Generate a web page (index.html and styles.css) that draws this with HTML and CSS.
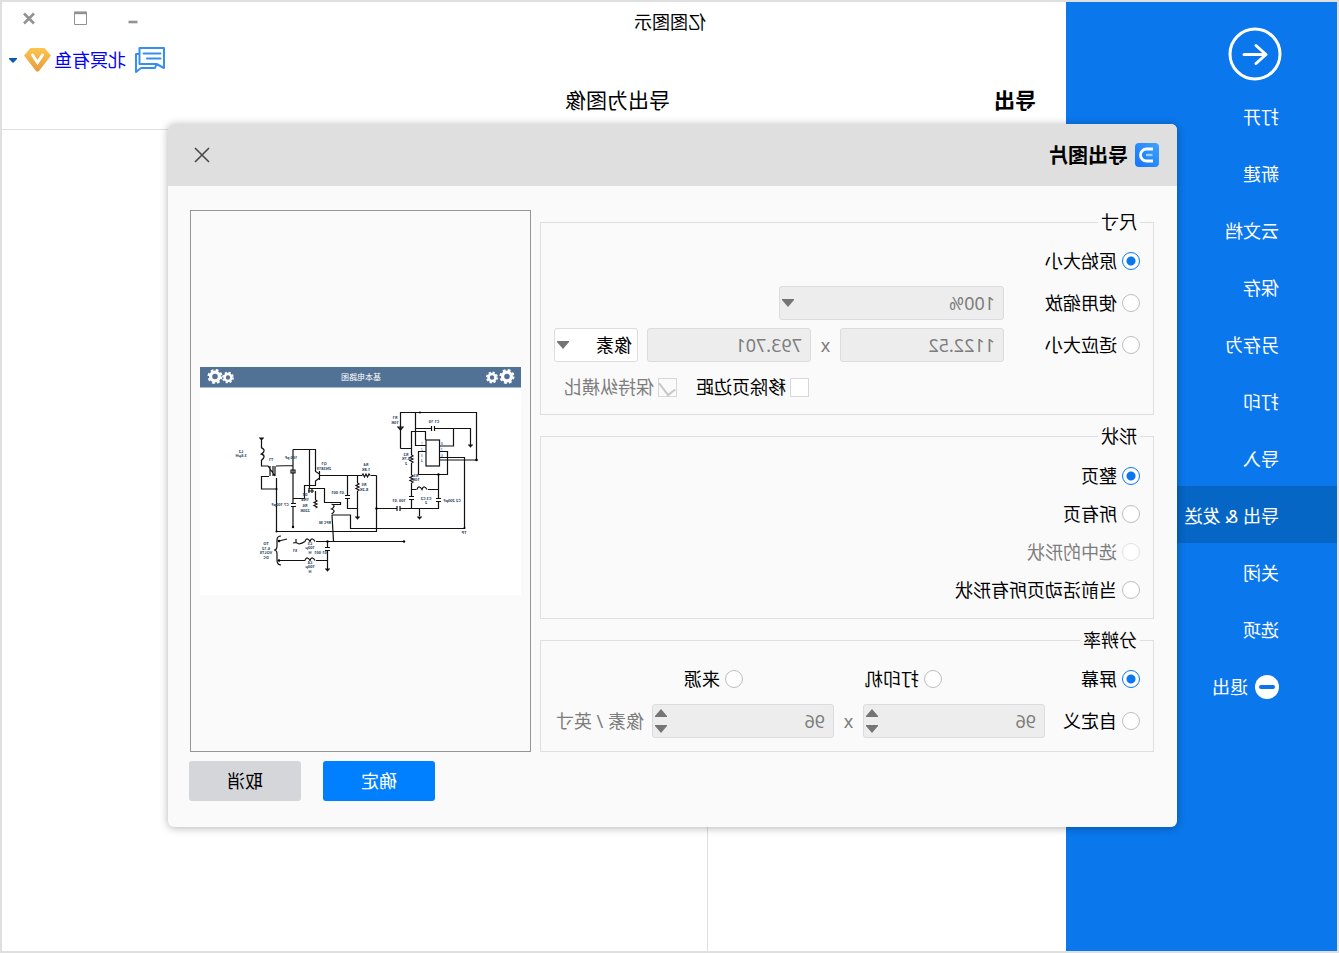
FILE: index.html
```
<!DOCTYPE html>
<html lang="zh-CN">
<head>
<meta charset="utf-8">
<title>亿图图示</title>
<link rel="stylesheet" href="styles.css">
</head>
<body>
<div class="window">
  <aside class="sidebar">
    <button class="back" aria-label="返回">
      <svg viewBox="0 0 54 54"><circle cx="27" cy="27" r="25" fill="none" stroke="#fff" stroke-width="3"/><path d="M38 27.500H16M26 18.500l-10 9 10 9" fill="none" stroke="#fff" stroke-width="3" stroke-linecap="round" stroke-linejoin="round"/></svg>
    </button>
    <nav class="menu">
      <a href="#">打开</a>
      <a href="#">新建</a>
      <a href="#">云文档</a>
      <a href="#">保存</a>
      <a href="#">另存为</a>
      <a href="#">打印</a>
      <a href="#">导入</a>
      <a href="#" class="active">导出 &amp; 发送</a>
      <a href="#">关闭</a>
      <a href="#">选项</a>
      <a href="#"><svg class="exit" viewBox="0 0 24 24"><circle cx="12" cy="12" r="12" fill="#fff"/><rect x="4" y="10" width="16" height="4" rx="2" fill="#0a75e8"/></svg>退出</a>
    </nav>
  </aside>
  <main class="main">
    <header class="titlebar">
      <span class="app-name">亿图图示</span>
      <div class="controls">
        <button aria-label="最小化"><svg viewBox="0 0 16 16"><path d="M3.500 12h9" stroke="#929292" stroke-width="2.600"/></svg></button>
        <button aria-label="最大化"><svg viewBox="0 0 16 16"><path d="M2.500 2v12.500h12V2z" fill="none" stroke="#929292"/><path d="M2 3h13" stroke="#929292" stroke-width="2.400"/></svg></button>
        <button aria-label="关闭"><svg viewBox="0 0 16 16"><path d="M3 3.500l10 10M13 3.500l-10 10" stroke="#929292" stroke-width="2.600"/></svg></button>
      </div>
    </header>
    <div class="account">
      <svg class="chat" viewBox="0 0 30 26"><path d="M25.500 1H1v20l7.500-4h17zM8.500 17l1.500 4h14l5 4V7h-3.500M4.500 6.500h17M4.500 11.500h13.500" fill="none" stroke="#378fec" stroke-width="2" stroke-linecap="round" stroke-linejoin="round"/></svg>
      <a href="#" class="user">北冥有鱼</a>
      <svg class="badge" viewBox="0 0 27 24"><defs><linearGradient id="gold" x2="0" y2="1"><stop stop-color="#fcc54f"/><stop offset="1" stop-color="#e59a3c"/></linearGradient></defs><path d="M6.500 0h14L27 7.500 15 23q-1.500 1.500-3 0L0 7.500z" fill="url(#gold)"/><path d="M8.500 7l5 7.500L18.500 7" fill="none" stroke="#fff" stroke-width="3" stroke-linecap="round"/></svg>
      <svg class="caret" viewBox="0 0 8 5"><path d="M0 0h8v1L4 5 0 1z" fill="#0959b3"/></svg>
    </div>
    <div class="headings">
      <h1>导出</h1>
      <h2>导出为图像</h2>
    </div>
    <div class="panes"><div></div><div></div></div>
  </main>

  <section class="dialog" role="dialog" aria-labelledby="dialog-title">
    <header class="dialog-head">
      <svg class="logo" viewBox="0 0 24 24"><defs><linearGradient id="blue" x1="0" y1="0" x2="1" y2="1"><stop stop-color="#3fa3ff"/><stop offset="1" stop-color="#1473fb"/></linearGradient></defs><rect width="24" height="24" rx="4" fill="url(#blue)"/><path d="M6 6h6.500a6 6 0 0 1 0 12H6" fill="none" stroke="#fff" stroke-width="2.800"/><path d="M6.500 12H13" stroke="#9fd0ff" stroke-width="2.400"/></svg>
      <h3 id="dialog-title">导出图片</h3>
      <button class="close" aria-label="关闭"><svg viewBox="0 0 16 16"><path d="M1 1l14 14M15 1L1 15" stroke="#484848" stroke-width="1.600"/></svg></button>
    </header>
    <div class="dialog-body">
      <form class="form">
        <fieldset class="size">
          <legend>尺寸</legend>
          <div class="row"><label class="opt"><input type="radio" name="size" checked>原始大小</label></div>
          <div class="row">
            <label class="opt lead"><input type="radio" name="size">使用缩放</label>
            <span class="pick zoom"><select disabled aria-label="缩放比例"><option>100%</option></select><svg viewBox="0 0 12 8"><path d="M0 0h12v1L6 8 0 1z"/></svg></span>
          </div>
          <div class="row">
            <label class="opt lead"><input type="radio" name="size">适应大小</label>
            <input class="field" type="text" value="1122.52" disabled aria-label="宽度">
            <span class="times">x</span>
            <input class="field" type="text" value="793.701" disabled aria-label="高度">
            <span class="pick unit"><select aria-label="单位"><option>像素</option></select><svg viewBox="0 0 12 8"><path d="M0 0h12v1L6 8 0 1z"/></svg></span>
          </div>
          <div class="row checks">
            <label class="opt"><input type="checkbox">移除页边距</label>
            <label class="opt off"><input type="checkbox" checked disabled>保持纵横比</label>
          </div>
        </fieldset>
        <fieldset class="shape">
          <legend>形状</legend>
          <div class="row"><label class="opt"><input type="radio" name="shape" checked>整页</label></div>
          <div class="row"><label class="opt"><input type="radio" name="shape">所有页</label></div>
          <div class="row"><label class="opt off"><input type="radio" name="shape" disabled>选中的形状</label></div>
          <div class="row"><label class="opt"><input type="radio" name="shape">当前活动页所有形状</label></div>
        </fieldset>
        <fieldset class="dpi">
          <legend>分辨率</legend>
          <div class="row thirds">
            <label class="opt"><input type="radio" name="dpi" checked>屏幕</label>
            <label class="opt"><input type="radio" name="dpi">打印机</label>
            <label class="opt"><input type="radio" name="dpi">来源</label>
          </div>
          <div class="row">
            <label class="opt lead"><input type="radio" name="dpi">自定义</label>
            <span class="spin"><input class="field" type="text" value="96" disabled aria-label="水平分辨率"><svg viewBox="0 0 12 24"><path d="M6 0l6 7v1H0V7zM0 16h12v1l-6 7-6-7z"/></svg></span>
            <span class="times">x</span>
            <span class="spin"><input class="field" type="text" value="96" disabled aria-label="垂直分辨率"><svg viewBox="0 0 12 24"><path d="M6 0l6 7v1H0V7zM0 16h12v1l-6 7-6-7z"/></svg></span>
            <span class="per">像素 / 英寸</span>
          </div>
        </fieldset>
      </form>
      <div class="preview">
        <svg viewBox="0 367 321 228" role="img" aria-label="基本电路图">
          <defs>
            <g id="gear"><circle r="4.400" fill="none" stroke="#fff" stroke-width="3.200"/><circle r="6.500" fill="none" stroke="#fff" stroke-width="2" stroke-dasharray="2.800 2.300"/></g>
            <path id="coil" d="M0 0q1-3 2.500-2.500T5 0q1-3 2.500-2.500T10 0"/>
            <path id="res" d="M0 0l1-1.500 1.500 3 1.500-3 1.500 3 1.500-3L8 0"/>
            <path id="ground" d="M-2.500 0h5M-1.500 1h3M-.5 2h1"/>
          </defs>
          <rect y="367" width="321" height="228" fill="#fff"/>
          <rect y="367" width="321" height="20.500" fill="#527295"/>
          <g transform="translate(521 0) scale(-1 1)">
            <use href="#gear" x="215" y="376.500"/>
            <use href="#gear" transform="translate(228 377.500) scale(.78)"/>
            <use href="#gear" x="507" y="376.500"/>
            <use href="#gear" transform="translate(492 377.500) scale(.8)"/>
            <g class="wire">
              <path d="M400.500 448.500v-36h76v47.500h-37M400.500 448.500h11M415.500 412.500v33H426M415.500 428.500h16M435 428.500h35.500v17M453.500 428.500v17.500h-14M425.500 440v-8.500h-14V455M411.500 463v12M411.500 483v13M411.500 500v8.500M426 451.500h-7.500v23h29v-23h-8M439.500 457.500h25v71h-114V515H332"/>
              <path d="M438.500 474.500V498M438.500 501v7.500H400M397 508.500h-20.500M411.500 489.500h5M428 489.500h10.500M419.500 508.500V516M376.500 475.500v56h-100V478M376.500 475.500h-6M362 475.500h-42M357.500 475.500V483M357.500 491v26M347.500 475.500V495M347.500 499v9.500h10"/>
              <path d="M293 449.500h22.500v22l4 2.500M319.500 478l-4 3v4.500h-11v13H293M319.500 471v9M293 449.500V503M293 507v20M309.500 449.500v39h15v14h16v2h-8M315.500 491v9M332 515l1.500 26M261.500 438v10M261.500 460v6h7M276 466l17-.5M269 476.500h-7.500v12.500h15M270 466v10M273 466v10M275 466v10M268 466l7 10"/>
              <path d="M279 541l8-2M293 543l3-.5 3 1.500q3-.5 6-2.500M296 539v4M316 541.500h88M279 560.500h26M316 560.500h11.500M327.500 541.500V547M327.500 550v20M281 536q-4 0-4 4v6q0 4-3 4 3 0 3 4v6q0 5 4 5"/>
              <path d="M431.500 426v5M434.500 426v5M409 496.500h5M409 499.500h5M436 498.500h5M436 501.500h5M397 506v5M400 506v5M345 495.500h5M345 498.500h5M291 503.500h5M291 506.500h5M325 547.500h5M325 550.500h5M291 470h4v3h-4zM308 491h6M309 488v5M312 488v5M398 427l5 0-2.500 3z"/>
              <rect x="426" y="440" width="13.500" height="26"/>
              <use href="#coil" x="417" y="489.500"/><use href="#coil" x="305" y="541.500"/><use href="#coil" x="305" y="560.500"/>
              <use href="#coil" transform="translate(331.500 504) rotate(90) scale(1 1)"/>
              <use href="#coil" transform="translate(261.500 448) rotate(90) scale(1.200 1)"/>
              <use href="#res" x="362" y="475.500"/>
              <use href="#res" transform="translate(411.500 455) rotate(90)"/><use href="#res" transform="translate(411.500 475) rotate(90)"/>
              <use href="#res" transform="translate(357.500 483) rotate(90)"/><use href="#res" transform="translate(315.500 500) rotate(90)"/>
              <use href="#ground" x="470.500" y="445"/><use href="#ground" x="419.500" y="517"/><use href="#ground" x="357.500" y="517"/><use href="#ground" x="327.500" y="569"/><use href="#ground" x="261.500" y="438"/>
            </g>
            <g fill="#000"><circle cx="420" cy="412.500" r="1"/><circle cx="476.500" cy="460" r="1.300"/><circle cx="276.500" cy="489" r="1"/><circle cx="276.500" cy="531.500" r="1"/><circle cx="293" cy="527" r="1.200"/><circle cx="404" cy="541.500" r="1.200"/><circle cx="464.500" cy="528" r="1"/><circle cx="376.500" cy="508.500" r="1.200"/><circle cx="438.500" cy="474.500" r="1.200"/><circle cx="279" cy="541" r="1.300"/><circle cx="279" cy="560.500" r="1.300"/><circle cx="327.500" cy="541.500" r="1.200"/></g>
          </g>
          <text class="caption" x="160" y="380">基本电路图</text>
          <g class="tags">
            <text x="126" y="419">R1</text><text x="126" y="424">10K</text>
            <text x="87" y="423">C1 10</text>
            <text x="115" y="456">R2</text><text x="115" y="460">4.7K</text><text x="115" y="465">2</text>
            <text x="105" y="477">R3</text><text x="105" y="481">10K</text>
            <text x="122" y="502">100 .01</text><text x="95" y="500">C3 C2</text><text x="95" y="504">2</text><text x="69" y="502">C2 200pF</text>
            <text x="57" y="534">TP</text>
            <text x="155" y="466">R4</text><text x="155" y="471">1.8K</text>
            <text x="157" y="486">R5</text><text x="157" y="491">8.2K</text><text x="183" y="494">.01 001</text>
            <text x="197" y="465">Q1</text><text x="197" y="470">2N3819</text>
            <text x="230" y="459">100 pF</text><text x="250" y="461">T1</text>
            <text x="280" y="453">L2</text><text x="280" y="457">3.6µH</text>
            <text x="216" y="496">D1</text><text x="216" y="501">1N4</text><text x="216" y="507">R6</text><text x="216" y="512">220K</text>
            <text x="241" y="506">C7 100pF</text><text x="196" y="524">RFC M</text>
            <text x="211" y="545">L3</text><text x="211" y="549">100µ</text><text x="211" y="554">H</text><text x="226" y="552">S1</text>
            <text x="211" y="564">L4</text><text x="211" y="568">100µ</text><text x="211" y="573">H</text><text x="200" y="554">.01 001</text>
            <text x="255" y="545">TO</text><text x="255" y="550">6-12</text><text x="255" y="554">VOLTS</text><text x="255" y="559">DC</text>
          </g>
          <g class="pins"><text x="98" y="445">1</text><text x="98" y="451">2</text><text x="98" y="457">3</text><text x="98" y="462">4</text><text x="78" y="445">8</text><text x="78" y="451">7</text><text x="78" y="457">6</text></g>
        </svg>
      </div>
    </div>
    <footer class="actions">
      <button class="btn primary">确定</button>
      <button class="btn">取消</button>
    </footer>
  </section>
</div>
</body>
</html>
```

FILE: styles.css
```
* { box-sizing: border-box; }

body {
  margin: 0;
  font: 18px/24px "Noto Sans", "Noto Sans CJK SC", sans-serif;
  color: #000;
}

button, input, select { font: inherit; color: inherit; }
button { border: 0; padding: 0; background: none; }
a { text-decoration: none; }
svg { display: block; }

/* The whole window is shown flipped left to right. */
.window {
  position: relative;
  display: grid;
  grid-template-columns: 271px 1fr;
  min-height: 100vh;
  border: 2px solid #dfdfdf;
  background: #fff;
  transform: scaleX(-1);
}

.sidebar { background: #0a77ec; color: #fff; padding-top: 25px; }
.back { display: block; width: 54px; height: 54px; margin-left: 55px; }
.menu { display: flex; flex-direction: column; margin-top: 6px; }
.menu a {
  display: flex;
  align-items: center;
  gap: 7px;
  height: 57px;
  padding: 2px 0 0 58px;
  color: #fff;
}
.menu .active { background: #0666c6; }
.exit { width: 24px; height: 24px; }

.main { display: flex; flex-direction: column; }
.titlebar {
  display: flex;
  justify-content: space-between;
  align-items: center;
  height: 40px;
  padding: 0 19px 0 360px;
}
.controls { display: flex; gap: 36px; align-self: flex-start; padding-top: 8px; }
.controls button, .controls svg { width: 16px; height: 16px; }
.account {
  display: flex;
  justify-content: flex-end;
  align-items: center;
  height: 36px;
  padding-right: 7px;
}
.chat { width: 30px; height: 26px; margin-right: 9px; }
.user { color: #00f; margin-right: 3px; }
.badge { width: 27px; height: 24px; margin-right: 7px; }
.caret { width: 8px; height: 5px; }
.headings {
  display: grid;
  grid-template-columns: 358px 1fr;
  height: 52px;
  padding-top: 8px;
  border-bottom: 1px solid #dfdfdf;
}
h1, h2, h3 { margin: 0; line-height: 28px; }
h1 { font-size: 21px; padding-left: 30px; }
h2 { font-size: 21px; font-weight: 400; padding-left: 38px; }
h3 { font-size: 20px; padding-top: 2px; }
.panes { display: grid; grid-template-columns: 358px 1fr; flex: 1; }
.panes div + div { border-left: 1px solid #dfdfdf; }

.dialog {
  position: absolute;
  top: 122px;
  left: 160px;
  right: 166px;
  border-radius: 6px;
  background: #fafafa;
  box-shadow: 0 1px 8px rgba(0, 0, 0, .3);
}
.dialog-head {
  display: flex;
  align-items: center;
  gap: 7px;
  height: 62px;
  padding: 0 26px 0 18px;
  border-radius: 6px 6px 0 0;
  background: #dfdfdf;
}
.logo { width: 24px; height: 24px; }
.close { margin-left: auto; }
.close svg { width: 16px; height: 16px; }

.dialog-body {
  display: grid;
  grid-template-columns: 1fr 341px;
  gap: 9px;
  padding: 24px 22px 9px 23px;
}
.form { display: flex; flex-direction: column; gap: 9px; }
fieldset {
  min-width: 0;
  margin: 0;
  padding: 10px 13px;
  border: 1px solid #dfdfdf;
}
legend { height: 24px; padding: 0 3px; }
.row { display: flex; align-items: center; height: 34px; }
.row + .row { margin-top: 8px; }
.shape { padding: 13px; }
.shape .row { height: 30px; }
.dpi { padding-bottom: 13px; }

.opt { display: flex; align-items: center; gap: 5px; white-space: nowrap; }
.opt input { appearance: none; flex: none; margin: 0; background: #fff; }
.opt [type="radio"] {
  width: 18px;
  height: 18px;
  border: 1px solid #bebebe;
  border-radius: 50%;
}
.opt [type="radio"]:checked {
  border-color: #0a77ec;
  background: radial-gradient(circle, #0a77ec 4px, #fff 5px);
}
.opt [type="radio"]:disabled { border-color: #e2e2e2; }
.opt [type="checkbox"] { display: grid; place-items: center; width: 19px; height: 19px; border: 1px solid #d8d8dc; }
.opt [type="checkbox"]:disabled { background: #fafafa; }
.opt [type="checkbox"]:checked::before {
  content: "";
  width: 8px;
  height: 14px;
  margin-bottom: 5px;
  border: solid #c8c8c8;
  border-width: 0 2px 2px 0;
  transform: rotate(38deg);
}
.off, .times, .per { color: #7d7d7d; }

.size .lead { width: 136px; }
.dpi .lead { width: 95px; }
.field, .pick select {
  width: 100%;
  height: 34px;
  padding: 0 8px;
  border: 1px solid #dcdce0;
  border-radius: 3px;
  background: #ededed;
  color: #7d7d7d;
}
.pick select { display: block; appearance: none; opacity: 1; }
.pick.unit select { padding-left: 5px; background: #fff; color: #000; }
.size .field { width: 164px; }
.pick, .spin { position: relative; }
.pick svg, .spin svg { position: absolute; right: 3px; fill: #757575; pointer-events: none; }
.pick svg { top: 13px; width: 12px; height: 8px; }
.spin svg { top: 5px; width: 12px; height: 24px; }
.zoom { width: 225px; }
.unit { width: 84px; margin-left: 9px; }
.spin { width: 182px; }
.times { width: 29px; text-align: center; }
.per { margin-left: 8px; white-space: nowrap; }
.checks { gap: 19px; padding-left: 331px; }
.checks .opt { gap: 4px; }
.thirds { display: grid; grid-template-columns: 198px 199px 1fr; }

.preview {
  display: flex;
  align-items: center;
  padding: 0 9px;
  border: 1px solid #959595;
}
.preview svg { width: 100%; }
.wire { fill: none; stroke: #111; stroke-width: 1.2; }
.caption { font-size: 8px; fill: #fff; text-anchor: middle; }
.tags { font-size: 4px; font-weight: 700; fill: #2d4564; text-anchor: middle; }
.pins { font-size: 4px; fill: #1878c8; }

.actions {
  display: flex;
  justify-content: flex-end;
  gap: 22px;
  padding: 0 21px 26px;
}
.btn { width: 112px; height: 40px; border-radius: 3px; background: #d5d6da; }
.primary { background: #007fff; color: #fff; }
```
